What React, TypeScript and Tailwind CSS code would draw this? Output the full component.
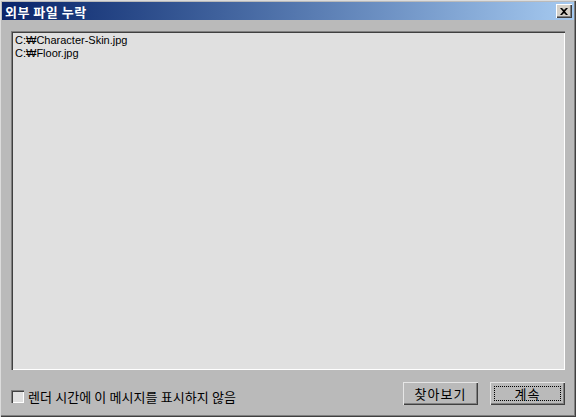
import { useState } from 'react';

const files = ['C:₩Character-Skin.jpg', 'C:₩Floor.jpg'];

export default function App() {
  const [hide, setHide] = useState(false);

  return (
    <div className="w-[576px] h-[417px] bg-[#bababa] flex flex-col p-[2px] shadow-[inset_1px_1px_0_#dcdcdc,inset_-1px_-1px_0_#404040,inset_-2px_-2px_0_#808080] font-['Noto_Sans_CJK_KR',sans-serif]">
      {/* title bar */}
      <div className="h-[18px] flex items-center justify-between pl-[3px] pr-[2px] bg-gradient-to-r from-[#0a246a] to-[#a6caf0]">
        <span className="text-white text-[13px] font-bold leading-none tracking-[0.5px]">외부 파일 누락</span>
        <button className="w-[16px] h-[14px] bg-[#d4d0c8] flex items-center justify-center shadow-[inset_1px_1px_0_#fff,inset_-1px_-1px_0_#404040,inset_-2px_-2px_0_#808080]">
          <svg width="8" height="7" viewBox="0 0 8 7">
            <path d="M0 0h2l2 2 2-2h2L5 3.5 8 7H6L4 5 2 7H0l3-3.5z" fill="#000" />
          </svg>
        </button>
      </div>

      {/* file list */}
      <div className="mt-[11px] mx-[9px] h-[339px] bg-[#e0e0e0] pt-[3px] pl-[4px] shadow-[inset_1px_1px_0_#808080,inset_2px_2px_0_#404040,inset_-1px_-1px_0_#fff]">
        {files.map((f) => (
          <div key={f} className="text-[11px] leading-[13px] text-black font-['Liberation_Sans','Noto_Sans_CJK_KR',sans-serif]">
            {f}
          </div>
        ))}
      </div>

      {/* footer */}
      <div className="flex items-center justify-between mt-[12px] ml-[9px] mr-[9px]">
        <label className="flex items-center gap-[4px] mt-[5px] cursor-pointer" onClick={() => setHide(!hide)}>
          <span className="w-[13px] h-[13px] bg-[#e0e0e0] flex items-center justify-center shadow-[inset_1px_1px_0_#808080,inset_2px_2px_0_#404040,inset_-1px_-1px_0_#fff]">
            {hide && <span className="text-[10px] leading-none">✓</span>}
          </span>
          <span className="text-[13px] text-black leading-none tracking-[0.1px]">렌더 시간에 이 메시지를 표시하지 않음</span>
        </label>
        <div className="flex gap-[12px]">
          <button className="w-[75px] h-[23px] bg-[#bababa] text-[13px] tracking-[1px] text-black flex items-center justify-center shadow-[inset_1px_1px_0_#e6e6e6,inset_-1px_-1px_0_#404040,inset_-2px_-2px_0_#808080]">
            찾아보기
          </button>
          <button className="w-[75px] h-[23px] bg-[#bababa] text-[13px] tracking-[1px] text-black flex items-center justify-center shadow-[inset_1px_1px_0_#e6e6e6,inset_-1px_-1px_0_#404040,inset_-2px_-2px_0_#808080] p-[4px]">
            <span className="w-full h-full flex items-center justify-center border border-dotted border-black">계속</span>
          </button>
        </div>
      </div>
    </div>
  );
}
